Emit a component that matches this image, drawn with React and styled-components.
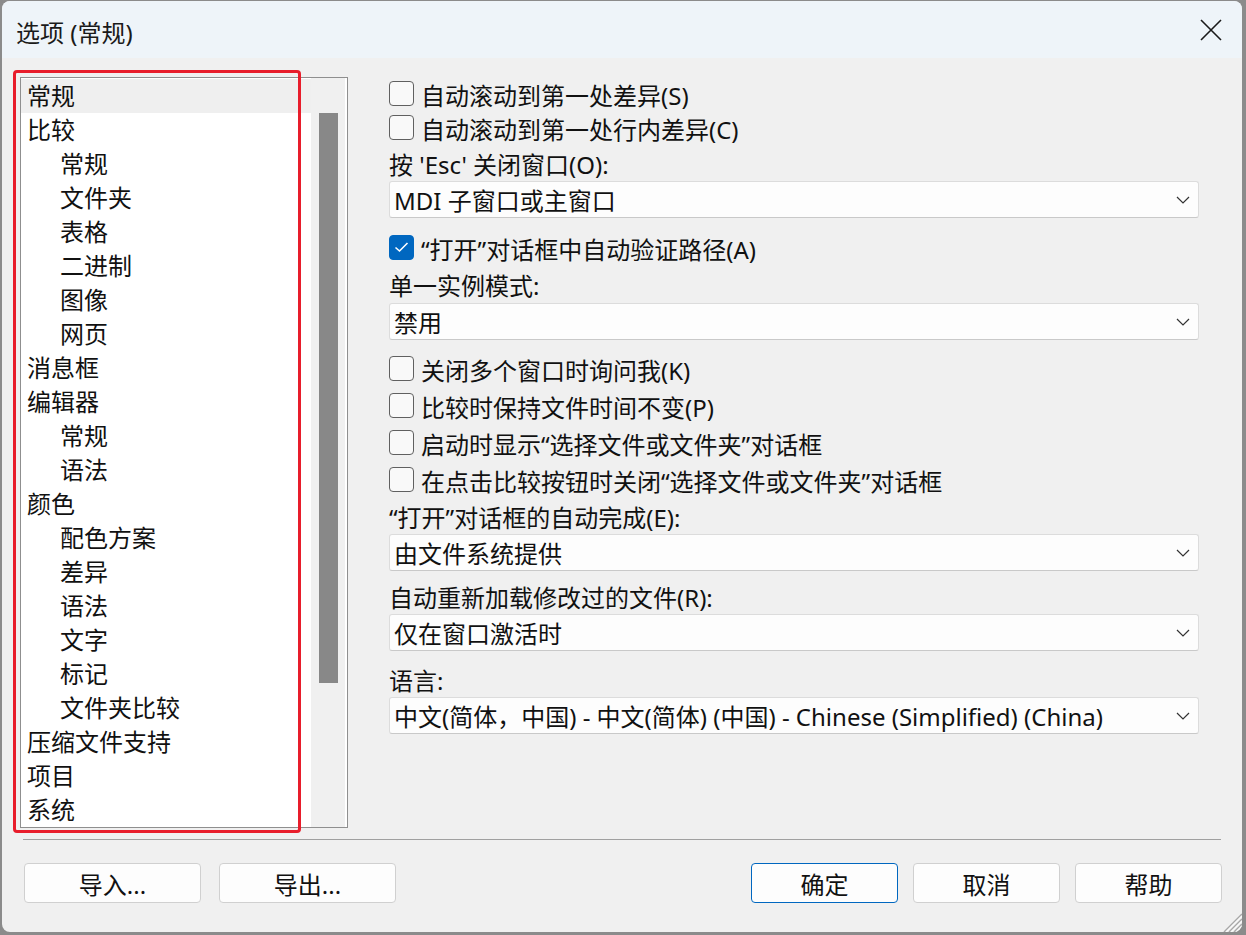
import React from 'react'
import styled, { createGlobalStyle } from 'styled-components'

const GlobalStyle = createGlobalStyle`
  html, body {
    margin: 0;
    padding: 0;
    background: #8b8b8b;
  }
  body {
    font-family: "Noto Sans", "Noto Sans CJK SC", sans-serif;
    color: #111;
  }
`

const Window = styled.div`
  position: relative;
  margin: 1px 4px 0 2px;
  width: 1240px;
  height: 931px;
  background: #f0f0f0;
  border-radius: 8px;
  overflow: hidden;
  display: flex;
  flex-direction: column;
`

const TitleBar = styled.div`
  height: 57px;
  flex: none;
  display: flex;
  align-items: center;
  padding: 3px 0 0 14px;
  box-sizing: border-box;
  background: #eef4f9;
  font-size: 24px;
  color: #1a1a1a;
`

const CloseBtn = styled.div`
  margin-left: auto;
  margin-right: 20px;
  margin-top: -3px;
  width: 22px;
  height: 22px;
  display: flex;
`

const Body = styled.div`
  padding: 19px 0 0 18px;
  display: flex;
  flex-direction: column;
`

const Main = styled.div`
  display: flex;
  align-items: flex-start;
`

const TreeBox = styled.div`
  position: relative;
  width: 328px;
  height: 751px;
  box-sizing: border-box;
  border: 1px solid #8f8f8f;
  background: #fff;
  display: flex;
`

const TreeList = styled.div`
  width: 290px;
  padding-top: 1px;
`

const TreeItem = styled.div`
  height: 34px;
  line-height: 34px;
  font-size: 24px;
  padding-left: ${({ $child }) => ($child ? '39px' : '6px')};
  background: ${({ $selected }) => ($selected ? '#efefef' : 'transparent')};
  white-space: nowrap;
`

const ScrollTrack = styled.div`
  width: 35px;
  background: #f0f0f0;
  border-right: 1px solid #fff;
  padding: 35px 0 0 8px;
  box-sizing: border-box;
`

const ScrollThumb = styled.div`
  width: 19px;
  height: 570px;
  background: #888;
`

const Highlight = styled.div`
  position: absolute;
  left: -8px;
  top: -8px;
  width: 288px;
  height: 763px;
  box-sizing: border-box;
  border: 3px solid #e81d2b;
  border-radius: 4px;
  pointer-events: none;
`

const Options = styled.div`
  margin: 1px 0 0 41px;
  width: 810px;
  display: flex;
  flex-direction: column;
`

const CheckRow = styled.div`
  height: ${({ $h }) => $h || 35}px;
  margin-top: ${({ $mt }) => $mt || 0}px;
  display: flex;
  align-items: center;
  gap: 7px;
  font-size: 24px;
  white-space: nowrap;
  padding-bottom: 2px;
  box-sizing: border-box;
`

const Box = styled.span`
  width: 25px;
  height: 25px;
  flex: none;
  box-sizing: border-box;
  border-radius: 4px;
  margin-bottom: 3px;
  display: flex;
  align-items: center;
  justify-content: center;
  border: 1px solid ${({ $checked }) => ($checked ? '#0067c0' : '#606060')};
  background: ${({ $checked }) => ($checked ? '#0067c0' : '#f9f9f9')};
`

const Label = styled.div`
  height: 35px;
  margin-top: ${({ $mt }) => $mt || 0}px;
  display: flex;
  align-items: center;
  font-size: 24px;
  white-space: nowrap;
`

const Select = styled.div`
  height: 37px;
  margin-top: ${({ $mt }) => $mt || 0}px;
  box-sizing: border-box;
  border: 1px solid #dcdcdc;
  border-bottom-color: #c9c9c9;
  border-radius: 3px;
  background: #fdfdfd;
  display: flex;
  align-items: center;
  padding: 0 8px 0 4px;
  font-size: 24px;
  white-space: nowrap;
  span {
    flex: 1;
  }
`

const Separator = styled.div`
  margin: 11px 0 0 3px;
  width: 1198px;
  height: 1px;
  background: #a0a0a0;
`

const ButtonRow = styled.div`
  margin: 23px 20px 0 4px;
  display: flex;
  gap: 18px;
`

const RightButtons = styled.div`
  margin-left: auto;
  display: flex;
  gap: 15px;
`

const Button = styled.div`
  width: ${({ $w }) => $w}px;
  height: 40px;
  box-sizing: border-box;
  border: 1px solid ${({ $primary }) => ($primary ? '#0067c0' : '#d0d0d0')};
  border-radius: 4px;
  background: #fdfdfd;
  display: flex;
  align-items: center;
  justify-content: center;
  font-size: 24px;
`

const Grip = styled.svg`
  position: absolute;
  right: 0;
  bottom: 0;
`

const tree = [
  { t: '常规', sel: true },
  { t: '比较' },
  { t: '常规', c: true },
  { t: '文件夹', c: true },
  { t: '表格', c: true },
  { t: '二进制', c: true },
  { t: '图像', c: true },
  { t: '网页', c: true },
  { t: '消息框' },
  { t: '编辑器' },
  { t: '常规', c: true },
  { t: '语法', c: true },
  { t: '颜色' },
  { t: '配色方案', c: true },
  { t: '差异', c: true },
  { t: '语法', c: true },
  { t: '文字', c: true },
  { t: '标记', c: true },
  { t: '文件夹比较', c: true },
  { t: '压缩文件支持' },
  { t: '项目' },
  { t: '系统' },
]

function Chevron() {
  return (
    <svg width="14" height="8" viewBox="0 0 14 8">
      <polyline points="1,1 7,7 13,1" fill="none" stroke="#333" strokeWidth="1.2" />
    </svg>
  )
}

function Check({ checked, children, h, mt }) {
  return (
    <CheckRow $h={h} $mt={mt}>
      <Box $checked={checked}>
        {checked ? (
          <svg width="15" height="12" viewBox="0 0 15 12">
            <polyline points="1.5,6.5 5.5,10 13.5,2" fill="none" stroke="#fff" strokeWidth="1.6" />
          </svg>
        ) : null}
      </Box>
      {children}
    </CheckRow>
  )
}

function Dropdown({ value, mt }) {
  return (
    <Select $mt={mt}>
      <span>{value}</span>
      <Chevron />
    </Select>
  )
}

export default function App() {
  return (
    <>
      <GlobalStyle />
      <Window>
        <TitleBar>
          选项 (常规)
          <CloseBtn>
            <svg width="22" height="22" viewBox="0 0 22 22">
              <path d="M1 1 L21 21 M21 1 L1 21" stroke="#1a1a1a" strokeWidth="1.6" />
            </svg>
          </CloseBtn>
        </TitleBar>
        <Body>
          <Main>
            <TreeBox>
              <TreeList>
                {tree.map((e, i) => (
                  <TreeItem key={i} $child={e.c} $selected={e.sel}>
                    {e.t}
                  </TreeItem>
                ))}
              </TreeList>
              <ScrollTrack>
                <ScrollThumb />
              </ScrollTrack>
              <Highlight />
            </TreeBox>
            <Options>
              <Check>自动滚动到第一处差异(S)</Check>
              <Check h={33}>自动滚动到第一处行内差异(C)</Check>
              <Label>按 'Esc' 关闭窗口(O):</Label>
              <Dropdown value="MDI 子窗口或主窗口" />
              <Check checked mt={14}>“打开”对话框中自动验证路径(A)</Check>
              <Label>单一实例模式:</Label>
              <Dropdown value="禁用" mt={1} />
              <Check h={37} mt={12}>关闭多个窗口时询问我(K)</Check>
              <Check h={37}>比较时保持文件时间不变(P)</Check>
              <Check h={37}>启动时显示“选择文件或文件夹”对话框</Check>
              <Check h={37}>在点击比较按钮时关闭“选择文件或文件夹”对话框</Check>
              <Label $mt={-1}>“打开”对话框的自动完成(E):</Label>
              <Dropdown value="由文件系统提供" />
              <Label $mt={8}>自动重新加载修改过的文件(R):</Label>
              <Dropdown value="仅在窗口激活时" />
              <Label $mt={11}>语言:</Label>
              <Dropdown value="中文(简体，中国) - 中文(简体) (中国) - Chinese (Simplified) (China)" />
            </Options>
          </Main>
          <Separator />
          <ButtonRow>
            <Button $w={177}>导入...</Button>
            <Button $w={177}>导出...</Button>
            <RightButtons>
              <Button $w={147} $primary>确定</Button>
              <Button $w={147}>取消</Button>
              <Button $w={147}>帮助</Button>
            </RightButtons>
          </ButtonRow>
        </Body>
        <Grip width="22" height="22" viewBox="0 0 22 22">
          <path d="M22 4 L4 22 M22 9 L9 22 M22 14 L14 22 M22 19 L19 22" stroke="#a8a8a8" strokeWidth="1.5" />
          <path d="M22 6 L6 22 M22 11 L11 22 M22 16 L16 22" stroke="#fafafa" strokeWidth="1.2" />
        </Grip>
      </Window>
    </>
  )
}
